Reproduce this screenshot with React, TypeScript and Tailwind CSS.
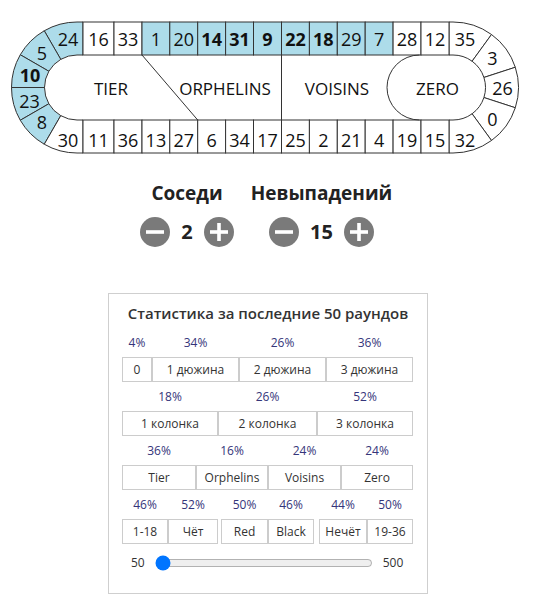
import React from "react";

const CX_L = 77;
const CX_R = 453;
const CY = 87.5;
const RO = 65.5;
const RI = 32.5;
const Y_TOP = 22;
const Y_IN_TOP = 55;
const Y_IN_BOT = 120;
const Y_BOT = 153;
const BLUE = "#addcea";
const LINE = "#333";

const xs = [83, 114, 142, 169.8, 197.7, 225.6, 253.5, 281.5, 309.4, 337.3, 365.2, 393.1, 421, 449];
const topNums = [16, 33, 1, 20, 14, 31, 9, 22, 18, 29, 7, 28, 12];
const botNums = [11, 36, 13, 27, 6, 34, 17, 25, 2, 21, 4, 19, 15];
const boldSet = new Set([10, 14, 31, 9, 22, 18]);

const rad = (a: number) => (a * Math.PI) / 180;
const pl = (a: number, r: number) => [CX_L - r * Math.sin(rad(a)), CY - r * Math.cos(rad(a))];
const pr = (a: number, r: number) => [CX_R + r * Math.sin(rad(a)), CY - r * Math.cos(rad(a))];
const f = (p: number[]) => `${p[0].toFixed(2)} ${p[1].toFixed(2)}`;

function leftWedge(a1: number, a2: number) {
  return `M ${f(pl(a1, RO))} A ${RO} ${RO} 0 0 0 ${f(pl(a2, RO))} L ${f(pl(a2, RI))} A ${RI} ${RI} 0 0 1 ${f(pl(a1, RI))} Z`;
}
function rightWedge(a1: number, a2: number) {
  return `M ${f(pr(a1, RO))} A ${RO} ${RO} 0 0 1 ${f(pr(a2, RO))} L ${f(pr(a2, RI))} A ${RI} ${RI} 0 0 0 ${f(pr(a1, RI))} Z`;
}

function Num({ x, y, n }: { x: number; y: number; n: number }) {
  return (
    <text
      x={x}
      y={y}
      textAnchor="middle"
      dominantBaseline="central"
      fontSize={18}
      fontWeight={boldSet.has(n) ? 700 : 400}
      fill="#111"
    >
      {n}
    </text>
  );
}

function Racetrack() {
  const leftWedges: { a1: number; a2: number; n: number; lx: number; ly: number }[] = [
    { a1: 30, a2: 60, n: 5, lx: 42, ly: 52.5 },
    { a1: 60, a2: 90, n: 10, lx: 30, ly: 75 },
    { a1: 90, a2: 120, n: 23, lx: 29.5, ly: 100.5 },
    { a1: 120, a2: 150, n: 8, lx: 42, ly: 122 },
  ];
  const rightWedges: { a1: number; a2: number; n: number; lx: number; ly: number }[] = [
    { a1: 36, a2: 72, n: 3, lx: 492.5, ly: 57.5 },
    { a1: 72, a2: 108, n: 26, lx: 502.5, ly: 88 },
    { a1: 108, a2: 144, n: 0, lx: 492.5, ly: 119 },
  ];
  const p24 = `M 83 ${Y_TOP} L ${CX_L} ${Y_TOP} A ${RO} ${RO} 0 0 0 ${f(pl(30, RO))} L ${f(pl(30, RI))} A ${RI} ${RI} 0 0 1 ${CX_L} ${Y_IN_TOP} L 83 ${Y_IN_TOP} Z`;
  const p30 = `M ${f(pl(150, RO))} A ${RO} ${RO} 0 0 0 ${CX_L} ${Y_BOT} L 83 ${Y_BOT} L 83 ${Y_IN_BOT} L ${CX_L} ${Y_IN_BOT} A ${RI} ${RI} 0 0 1 ${f(pl(150, RI))} Z`;
  const p35 = `M 449 ${Y_TOP} L ${CX_R} ${Y_TOP} A ${RO} ${RO} 0 0 1 ${f(pr(36, RO))} L ${f(pr(36, RI))} A ${RI} ${RI} 0 0 0 ${CX_R} ${Y_IN_TOP} L 449 ${Y_IN_TOP} Z`;
  const p32 = `M ${f(pr(144, RO))} A ${RO} ${RO} 0 0 1 ${CX_R} ${Y_BOT} L 449 ${Y_BOT} L 449 ${Y_IN_BOT} L ${CX_R} ${Y_IN_BOT} A ${RI} ${RI} 0 0 0 ${f(pr(144, RI))} Z`;

  return (
    <svg width={545} height={165} className="block" stroke={LINE} strokeWidth={1}>
      <rect x={CX_L} y={Y_IN_TOP} width={CX_R - CX_L} height={Y_IN_BOT - Y_IN_TOP} fill="#fff" stroke="none" />
      <path d={p24} fill={BLUE} />
      {leftWedges.map((w) => (
        <path key={w.n} d={leftWedge(w.a1, w.a2)} fill={BLUE} />
      ))}
      <path d={p30} fill="#fff" />
      <path d={p35} fill="#fff" />
      {rightWedges.map((w) => (
        <path key={w.n} d={rightWedge(w.a1, w.a2)} fill="#fff" />
      ))}
      <path d={p32} fill="#fff" />
      {topNums.map((n, i) => (
        <rect
          key={"t" + n}
          x={xs[i]}
          y={Y_TOP}
          width={xs[i + 1] - xs[i]}
          height={Y_IN_TOP - Y_TOP}
          fill={i >= 2 && i <= 10 ? BLUE : "#fff"}
        />
      ))}
      {botNums.map((n, i) => (
        <rect
          key={"b" + n}
          x={xs[i]}
          y={Y_IN_BOT}
          width={xs[i + 1] - xs[i]}
          height={Y_BOT - Y_IN_BOT}
          fill="#fff"
        />
      ))}
      <line x1={142} y1={Y_IN_TOP} x2={197.7} y2={Y_IN_BOT} />
      <line x1={281.5} y1={Y_IN_TOP} x2={281.5} y2={Y_IN_BOT} />
      <path d={`M 419.5 ${Y_IN_TOP} A ${RI} ${RI} 0 0 0 419.5 ${Y_IN_BOT}`} fill="none" />

      <g stroke="none">
        <Num x={68} y={38.5} n={24} />
        {leftWedges.map((w) => (
          <Num key={w.n} x={w.lx} y={w.ly} n={w.n} />
        ))}
        <Num x={68} y={139.5} n={30} />
        <Num x={465} y={38.5} n={35} />
        {rightWedges.map((w) => (
          <Num key={w.n} x={w.lx} y={w.ly} n={w.n} />
        ))}
        <Num x={465} y={139.5} n={32} />
        {topNums.map((n, i) => (
          <Num key={"tn" + n} x={(xs[i] + xs[i + 1]) / 2} y={38.5} n={n} />
        ))}
        {botNums.map((n, i) => (
          <Num key={"bn" + n} x={(xs[i] + xs[i + 1]) / 2} y={139.5} n={n} />
        ))}
        <text x={111} y={88} textAnchor="middle" dominantBaseline="central" fontSize={17} fill="#111">TIER</text>
        <text x={225} y={88} textAnchor="middle" dominantBaseline="central" fontSize={17} fill="#111">ORPHELINS</text>
        <text x={337} y={88} textAnchor="middle" dominantBaseline="central" fontSize={17} fill="#111">VOISINS</text>
        <text x={437.5} y={88} textAnchor="middle" dominantBaseline="central" fontSize={17} fill="#111">ZERO</text>
      </g>
    </svg>
  );
}

function CircleBtn({ plus }: { plus?: boolean }) {
  return (
    <svg width={30} height={30} viewBox="0 0 30 30" className="block shrink-0">
      <circle cx={15} cy={15} r={15} fill="#7a7a7a" />
      <rect x={6} y={13.2} width={18} height={3.6} fill="#fff" />
      {plus && <rect x={13.2} y={6} width={3.6} height={18} fill="#fff" />}
    </svg>
  );
}

function Counter({ title, value, width }: { title: string; value: string; width: string }) {
  return (
    <div className={`flex flex-col items-center ${width}`}>
      <div className="text-[19px] leading-[28px] font-bold text-[#222] whitespace-nowrap">{title}</div>
      <div className="mt-[10px] flex items-center gap-[11px] h-[30px]">
        <CircleBtn />
        <span className="text-[20px] leading-[28px] font-bold text-[#222]">{value}</span>
        <CircleBtn plus />
      </div>
    </div>
  );
}

type Cell = { p: string; l: string; w: string };

function StatCell({ c }: { c: Cell }) {
  return (
    <div className={`flex flex-col items-center ${c.w}`}>
      <div className="h-[16px] leading-[16px] text-[12px] text-[#35357a] whitespace-nowrap">{c.p}</div>
      <div className="mt-[6px] h-[25px] w-full border border-[#cccccc] flex items-center justify-center text-[12px] text-[#333] whitespace-nowrap">
        {c.l}
      </div>
    </div>
  );
}

const row1: Cell[] = [
  { p: "4%", l: "0", w: "w-[30px]" },
  { p: "34%", l: "1 дюжина", w: "w-[87px]" },
  { p: "26%", l: "2 дюжина", w: "w-[87px]" },
  { p: "36%", l: "3 дюжина", w: "w-[87px]" },
];
const row2: Cell[] = [
  { p: "18%", l: "1 колонка", w: "w-[96px]" },
  { p: "26%", l: "2 колонка", w: "w-[99px]" },
  { p: "52%", l: "3 колонка", w: "w-[96px]" },
];
const row3: Cell[] = [
  { p: "36%", l: "Tier", w: "w-[74px]" },
  { p: "16%", l: "Orphelins", w: "w-[72px]" },
  { p: "24%", l: "Voisins", w: "w-[73px]" },
  { p: "24%", l: "Zero", w: "w-[72px]" },
];
const g1: Cell[] = [
  { p: "46%", l: "1-18", w: "w-[46px]" },
  { p: "52%", l: "Чёт", w: "w-[50px]" },
];
const g2: Cell[] = [
  { p: "50%", l: "Red", w: "w-[47px]" },
  { p: "46%", l: "Black", w: "w-[46px]" },
];
const g3: Cell[] = [
  { p: "44%", l: "Нечёт", w: "w-[48px]" },
  { p: "50%", l: "19-36", w: "w-[46px]" },
];

function Row({ cells, className }: { cells: Cell[]; className?: string }) {
  return (
    <div className={`flex ${className ?? ""}`}>
      {cells.map((c) => (
        <StatCell key={c.l} c={c} />
      ))}
    </div>
  );
}

export default function App() {
  return (
    <div className="w-[545px] min-h-[612px] bg-white font-['Open_Sans',sans-serif] text-[#222]">
      <Racetrack />
      <div className="pt-[14px] flex ml-[142px] gap-[21px]">
        <Counter title="Соседи" value="2" width="w-[90px]" />
        <Counter title="Невыпадений" value="15" width="w-[137px]" />
      </div>
      <div className="mt-[46px] ml-[108px] w-[320px] border border-[#cfcfcf] pt-[9px] pb-[20px]">
        <div className="text-center text-[15px] leading-[20px] font-semibold text-[#333]">
          Статистика за последние 50 раундов
        </div>
        <div className="ml-[13px] mt-[12px] flex flex-col gap-[7px]">
          <Row cells={row1} />
          <Row cells={row2} />
          <Row cells={row3} />
          <div className="flex">
            <Row cells={g1} />
            <Row cells={g2} className="ml-[3px]" />
            <Row cells={g3} className="ml-[5px]" />
          </div>
        </div>
        <div className="mt-[9px] h-[20px] ml-[22px] flex items-center gap-[10px] text-[12px] text-[#333]">
          <span>50</span>
          <input type="range" min={50} max={500} defaultValue={50} className="w-[218px] m-0" />
          <span>500</span>
        </div>
      </div>
    </div>
  );
}
